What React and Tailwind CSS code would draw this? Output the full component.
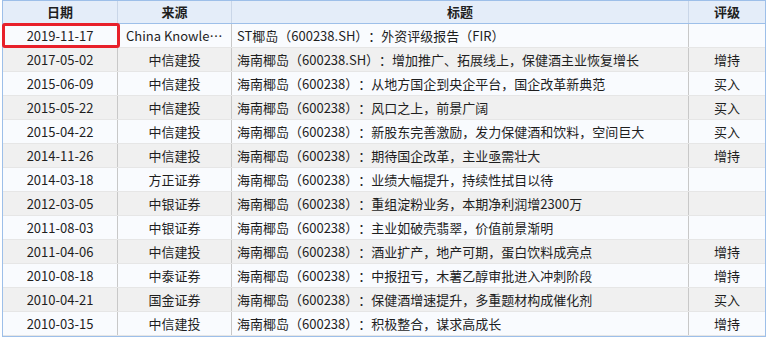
const rows = [
  ["2019-11-17", "China Knowledge Center", "ST椰岛（600238.SH）：外资评级报告（FIR）", ""],
  ["2017-05-02", "中信建投", "海南椰岛（600238.SH）：增加推广、拓展线上，保健酒主业恢复增长", "增持"],
  ["2015-06-09", "中信建投", "海南椰岛（600238）：从地方国企到央企平台，国企改革新典范", "买入"],
  ["2015-05-22", "中信建投", "海南椰岛（600238）：风口之上，前景广阔", "买入"],
  ["2015-04-22", "中信建投", "海南椰岛（600238）：新股东完善激励，发力保健酒和饮料，空间巨大", "买入"],
  ["2014-11-26", "中信建投", "海南椰岛（600238）：期待国企改革，主业亟需壮大", "增持"],
  ["2014-03-18", "方正证券", "海南椰岛（600238）：业绩大幅提升，持续性拭目以待", ""],
  ["2012-03-05", "中银证券", "海南椰岛（600238）：重组淀粉业务，本期净利润增2300万", ""],
  ["2011-08-03", "中银证券", "海南椰岛（600238）：主业如破壳翡翠，价值前景渐明", ""],
  ["2011-04-06", "中信建投", "海南椰岛（600238）：酒业扩产，地产可期，蛋白饮料成亮点", "增持"],
  ["2010-08-18", "中泰证券", "海南椰岛（600238）：中报扭亏，木薯乙醇审批进入冲刺阶段", "增持"],
  ["2010-04-21", "国金证券", "海南椰岛（600238）：保健酒增速提升，多重题材构成催化剂", "买入"],
  ["2010-03-15", "中信建投", "海南椰岛（600238）：积极整合，谋求高成长", "增持"],
];

export default function App() {
  return (
    <div className="w-[768px] h-[341px] bg-white text-[13px] text-[#1e1e1e] [text-spacing-trim:space-all] [font-family:'Noto_Sans_CJK_SC','Liberation_Sans',sans-serif]">
      <div className="relative ml-[2px] w-[764px] border border-[#9dbfe9]">
        <div className="flex h-[23px] bg-[#e4edf9] border-b border-[#9dbfe9] font-bold leading-[22px]">
          <div className="w-[115px] text-center border-r border-[#c9d6e8]">日期</div>
          <div className="w-[114px] text-center border-r border-[#c9d6e8]">来源</div>
          <div className="w-[457px] text-center border-r border-[#c9d6e8]">标题</div>
          <div className="flex-1 text-center">评级</div>
        </div>
        {rows.map((r, i) => (
          <div
            key={i}
            className={
              "flex h-[24px] leading-[23px] border-b border-[#e6e6e6] last:border-b-0 " +
              (i % 2 === 0 ? "bg-[#f9fbfe]" : "bg-[#f0f0f0]")
            }
          >
            <div className="w-[115px] text-center border-r border-[#c8c8c8]">{r[0]}</div>
            <div className="w-[114px] px-[8px] text-center truncate border-r border-[#c8c8c8]">{r[1]}</div>
            <div className="w-[457px] pl-[5px] truncate border-r border-[#c8c8c8]">{r[2]}</div>
            <div className="flex-1 text-center">{r[3]}</div>
          </div>
        ))}
        <div className="absolute left-[-1px] top-[22px] w-[118px] h-[25px] border-[3px] border-[#e8202a] rounded-[3px]" />
      </div>
    </div>
  );
}
